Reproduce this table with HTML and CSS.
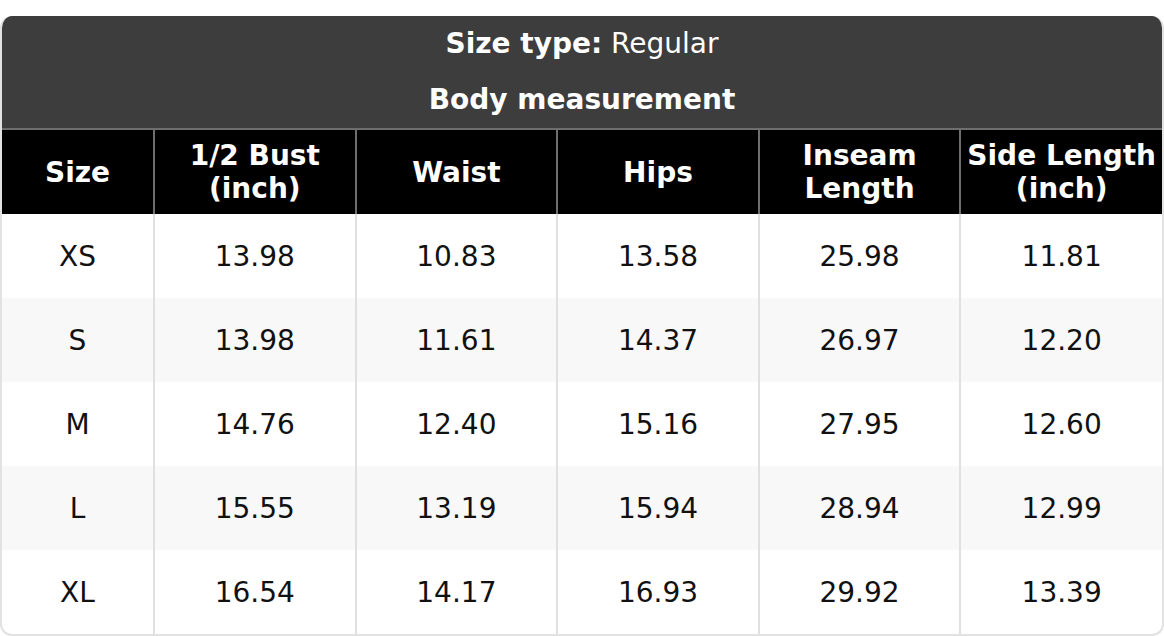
FILE: index.html
```html
<!DOCTYPE html>
<html>
<head>
<meta charset="utf-8">
<link rel="stylesheet" href="styles.css">
</head>
<body>
<div class="card">
  <div class="title">
    <div class="title-line"><b>Size type:</b> Regular</div>
    <div class="title-line"><b>Body measurement</b></div>
  </div>
  <table class="chart">
    <colgroup><col class="c-size"><col><col><col><col><col></colgroup>
    <thead>
      <tr><th>Size</th><th>1/2 Bust<br>(inch)</th><th>Waist</th><th>Hips</th><th>Inseam<br>Length</th><th>Side Length<br>(inch)</th></tr>
    </thead>
    <tbody>
      <tr><td>XS</td><td>13.98</td><td>10.83</td><td>13.58</td><td>25.98</td><td>11.81</td></tr>
      <tr><td>S</td><td>13.98</td><td>11.61</td><td>14.37</td><td>26.97</td><td>12.20</td></tr>
      <tr><td>M</td><td>14.76</td><td>12.40</td><td>15.16</td><td>27.95</td><td>12.60</td></tr>
      <tr><td>L</td><td>15.55</td><td>13.19</td><td>15.94</td><td>28.94</td><td>12.99</td></tr>
      <tr><td>XL</td><td>16.54</td><td>14.17</td><td>16.93</td><td>29.92</td><td>13.39</td></tr>
    </tbody>
  </table>
</div>
</body>
</html>
```
FILE: styles.css
```css
html, body {
  margin: 0;
  padding: 0;
  background: #fff;
}
body {
  padding-top: 16px;
  font-family: "DejaVu Sans", sans-serif;
  font-size: 28px;
  color: #111;
}
.card {
  width: 1164px;
  box-sizing: border-box;
  border: 2px solid #e2e2e2;
  border-top: none;
  border-radius: 12px;
  overflow: hidden;
}
.title {
  background: #3d3d3d;
  color: #fff;
  text-align: center;
  border-bottom: 2px solid #6e6e6e;
}
.title-line {
  height: 56px;
  line-height: 56px;
}
.chart {
  width: 100%;
  border-collapse: collapse;
  table-layout: fixed;
}
.c-size {
  width: 152px;
}
.chart th {
  background: #000;
  color: #fff;
  font-weight: bold;
  height: 84px;
  line-height: 33px;
  padding: 0;
  border-left: 2px solid #6e6e6e;
}
.chart td {
  height: 84px;
  padding: 0;
  text-align: center;
  border-left: 2px solid #e0e0e0;
}
.chart th:first-child, .chart td:first-child {
  border-left: none;
}
.chart tbody tr:nth-child(even) td {
  background: #f8f8f8;
}
```
